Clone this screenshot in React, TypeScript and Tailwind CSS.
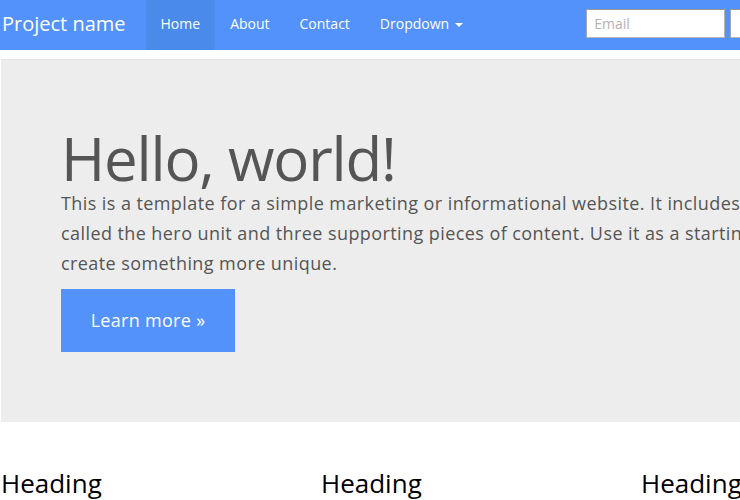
import React from "react";

export default function App() {
  const font = { fontFamily: '"Open Sans", "Noto Sans", sans-serif' };
  return (
    <div className="w-[740px] h-[500px] overflow-hidden bg-white" style={font}>
      <div className="w-[960px]">
        {/* Navbar */}
        <div className="h-[50px] w-[740px] bg-[#5292fa] flex items-stretch overflow-hidden">
          <div className="pl-[2px] pr-[20px] pb-[3px] flex items-center text-[20px] text-white leading-none whitespace-nowrap shrink-0">
            Project name
          </div>
          <ul className="flex items-stretch text-[14px] text-white shrink-0">
            <li className="px-[15px] pb-[3px] flex items-center bg-[#4a8ae9]">Home</li>
            <li className="px-[15px] pb-[3px] flex items-center">About</li>
            <li className="px-[15px] pb-[3px] flex items-center">Contact</li>
            <li className="px-[15px] pb-[3px] flex items-center gap-[6px]">
              Dropdown
              <span className="inline-block w-0 h-0 border-l-[4px] border-r-[4px] border-t-[4px] border-l-transparent border-r-transparent border-t-white mt-[2px]" />
            </li>
          </ul>
          <div className="ml-[108px] flex items-start pt-[9px] gap-[5px] shrink-0">
            <input
              placeholder="Email"
              className="w-[139px] h-[29px] bg-white border border-[#b5b5b5] border-t-[#9a9a9a] border-l-[#a8a8a8] px-[7px] text-[14px] text-[#555] placeholder:text-[#b3b3b3] outline-none"
              style={font}
            />
            <input className="w-[139px] h-[29px] bg-white border border-[#b5b5b5] border-t-[#9a9a9a] border-l-[#a8a8a8]" />
          </div>
        </div>

        {/* Hero */}
        <div className="mt-[9px] ml-px bg-[#ededed] pt-[68px] pl-[60px] h-[363px] border-t border-[#e6e6e6]">
          <h1 className="text-[60px] leading-[60px] tracking-[-1.2px] text-[#555555] whitespace-nowrap">
            Hello, world!
          </h1>
          <p className="text-[18px] leading-[30px] text-[#555555] whitespace-nowrap tracking-[0.42px]">
            This is a template for a simple marketing or informational website. It includes a large callout
            <br />
            called the hero unit and three supporting pieces of content. Use it as a starting point to
            <br />
            create something more unique.
          </p>
          <div className="mt-[11px]">
            <span className="inline-flex items-center justify-center w-[174px] h-[63px] bg-[#5292fa] text-white text-[18px] tracking-[0.3px]">
              Learn more »
            </span>
          </div>
        </div>

        {/* Columns */}
        <div className="grid grid-cols-[320px_320px_320px] mt-[46px]">
          <h2 className="text-[26px] leading-[30px] text-black pl-[1px]">Heading</h2>
          <h2 className="text-[26px] leading-[30px] text-black pl-[1px]">Heading</h2>
          <h2 className="text-[26px] leading-[30px] text-black pl-[1px]">Heading</h2>
        </div>
      </div>
    </div>
  );
}
